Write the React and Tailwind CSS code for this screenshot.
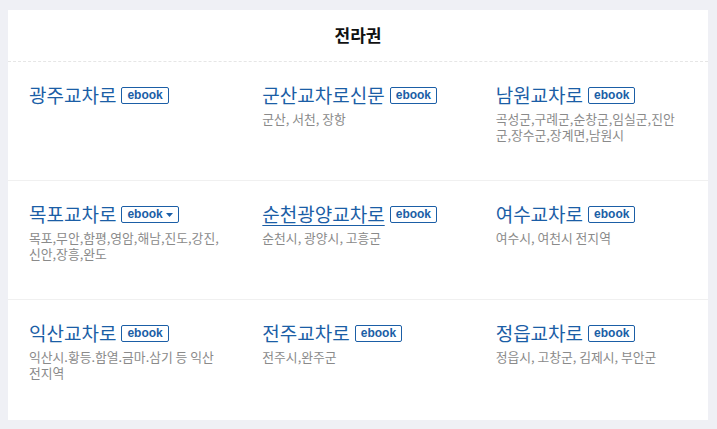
import React from 'react'

const rows = [
  [
    { name: '광주교차로', desc: [] },
    { name: '군산교차로신문', desc: ['군산, 서천, 장항'] },
    { name: '남원교차로', desc: ['곡성군,구례군,순창군,임실군,진안', '군,장수군,장계면,남원시'] },
  ],
  [
    { name: '목포교차로', desc: ['목포,무안,함평,영암,해남,진도,강진,', '신안,장흥,완도'], menu: true },
    { name: '순천광양교차로', desc: ['순천시, 광양시, 고흥군'], hover: true },
    { name: '여수교차로', desc: ['여수시, 여천시 전지역'] },
  ],
  [
    { name: '익산교차로', desc: ['익산시.황등.함열.금마.삼기 등 익산', '전지역'] },
    { name: '전주교차로', desc: ['전주시,완주군'] },
    { name: '정읍교차로', desc: ['정읍시, 고창군, 김제시, 부안군'] },
  ],
]

function EbookBadge({ menu }) {
  return (
    <span className="ml-[5px] inline-flex h-[17px] items-center gap-[3px] rounded-[2px] border border-[#1b5ea6] px-[5px] font-['Liberation_Sans',sans-serif] text-[12px] leading-none font-bold text-[#1b5ea6]">
      ebook
      {menu && (
        <svg width="7" height="4" viewBox="0 0 7 4" className="mt-[1px]">
          <path d="M0 0h7L3.5 4z" fill="#1b5ea6" />
        </svg>
      )}
    </span>
  )
}

export default function App() {
  return (
    <div className="min-h-[429px] bg-[#eff0f5] px-2 pt-[10px] pb-[10px] font-['Noto_Sans_CJK_KR',sans-serif]">
      <div className="w-[700px] bg-white">
        <div className="flex h-[52px] items-center justify-center border-b border-dashed border-[#e6e6e6] pb-[1px] text-[17px] font-bold text-[#111]">
          전라권
        </div>
        {rows.map((row, i) => (
          <div
            key={i}
            className={`grid h-[119px] grid-cols-3 ${i < 2 ? 'border-b border-[#f0f0f0]' : ''}`}
          >
            {row.map((item) => (
              <div key={item.name} className="pt-[20px] pl-[21px]">
                <div className="flex items-center">
                  <span
                    className={`text-[19px] leading-[26px] text-[#1b5ea6] ${item.hover ? 'underline decoration-1 underline-offset-[3px]' : ''}`}
                  >
                    {item.name}
                  </span>
                  <EbookBadge menu={item.menu} />
                </div>
                {item.desc.length > 0 && (
                  <p className="mt-[3px] text-[12.8px] leading-[15.5px] whitespace-nowrap text-[#8a8a8a]">
                    {item.desc.map((line, j) => (
                      <React.Fragment key={j}>
                        {j > 0 && <br />}
                        {line}
                      </React.Fragment>
                    ))}
                  </p>
                )}
              </div>
            ))}
          </div>
        ))}
        <div className="h-[1px]" />
      </div>
    </div>
  )
}
